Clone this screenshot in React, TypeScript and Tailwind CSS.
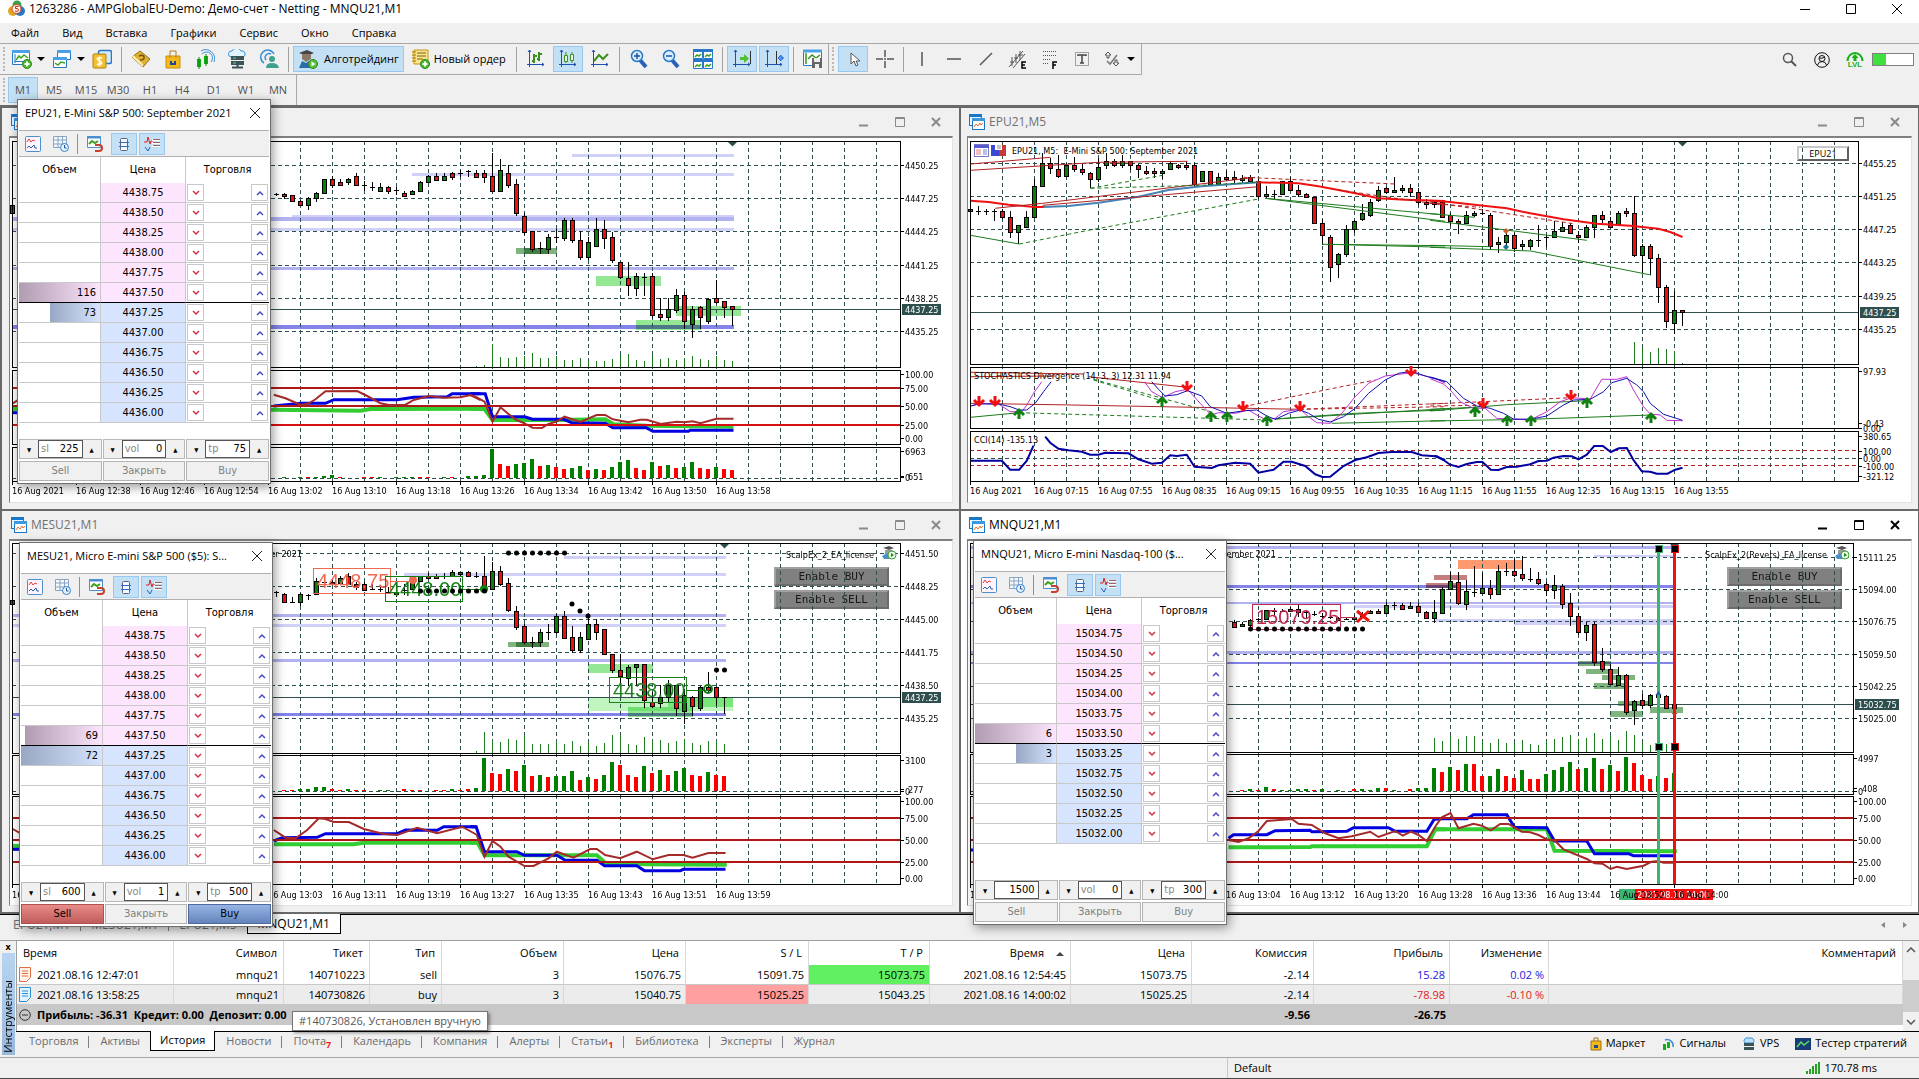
import { ReactNode } from 'react';

const ui = "font-['Open_Sans','Noto_Sans',sans-serif]";
const small = "font-['DejaVu_Sans_Condensed','DejaVu_Sans','Noto_Sans',sans-serif]";

// [bar, high, body top, body bottom, low, colour]  g = up, r = down, d = doji
type Candle = [number, number, number, number, number, 'g' | 'r' | 'd'];
// [first bar, top, last bar, bottom, colour]
type Zone = [number, number, number, number, string];

type Series = { color: string; width: number; a?: string; b?: string; dash?: boolean };

type ChartData = {
  col: 0 | 1;
  y0: number;
  right: number;
  panes: [number, number][];
  grid: number[];
  prices: string[];
  price: [number, string];
  subGrid?: number[];
  levels: [number, string, number?][];
  scale: [number, string, number?][];
  times: string[];
  timeY: number;
  bands: Zone[];
  zones: Zone[];
  candles: Candle[];
  ticks: [number, number[]];
  bars?: [number, number, string, number[]];
  under: Series[];
  series: Series[];
  marker: number;
};

const LIGHT = '#d0d0f8';
const MID = '#b2b2f0';
const STRONG = '#8484ea';
const LIME = '#94e894';
const MOSS = '#7fb47f';

function parse(s: string, col: 0 | 1, half: 'a' | 'b') {
  const start = half === 'a' ? [36, 46][col] : [67, 61][col];
  const base = half === 'a' ? 0 : 60;
  return s.split(' ').map((p) => {
    const [x, y] = p.split(',').map(Number);
    return [base + (x - start) / 24, y];
  });
}

function toX(i: number) {
  return 2.5 + i * 8;
}

function Trace({ s, c }: { s: Series; c: ChartData }) {
  const chunks = [
    ...(s.a ? s.a.split('|').map((p) => parse(p, c.col, 'a')) : []),
    ...(s.b ? s.b.split('|').map((p) => parse(p, c.col, 'b')) : []),
  ];
  return (
    <>
      {chunks.map((pts, k) => (
        <polyline
          key={k}
          points={pts.map(([i, y]) => `${toX(i).toFixed(1)},${(y / 3 - c.y0).toFixed(1)}`).join(' ')}
          fill="none"
          stroke={s.color}
          strokeWidth={s.width}
          strokeDasharray={s.dash ? '4 3' : undefined}
        />
      ))}
    </>
  );
}

function Chart({ c, children }: { c: ChartData; children?: ReactNode }) {
  const Y = (v: number) => Math.round(v / 3 - c.y0);
  const top = Y(c.panes[0][0]);
  const bottom = Y(c.panes[c.panes.length - 1][1]);
  const grid = Array.from({ length: 27 }, (_, k) => 34 + k * 32);
  return (
    <svg className={`relative block h-[364px] w-full text-[9px] ${small}`}>
      <g shapeRendering="crispEdges">
        {c.bands.map(([i, t, j, b, fill], k) => (
          <rect key={k} x={8 * i + 2} y={Y(t)} width={8 * (j - i) + 2} height={Y(b) - Y(t)} fill={fill} />
        ))}
        {c.zones.map(([i, t, j, b, fill], k) => (
          <rect
            key={k}
            x={8 * i + 2.5}
            y={Y(t) + 0.5}
            width={8 * (j - i)}
            height={Y(b) - Y(t) - 1}
            fill={fill}
            stroke={fill}
            className="mix-blend-multiply"
          />
        ))}
        {grid.map((x) => (
          <line key={x} x1={x + 0.5} x2={x + 0.5} y1={top} y2={bottom} stroke="#2f4f4f" strokeDasharray="4 3" />
        ))}
        {[...c.grid, ...(c.subGrid ?? [])].map((v) => (
          <line key={v} x1="2" x2={c.right} y1={Y(v) + 0.5} y2={Y(v) + 0.5} stroke="#2f4f4f" strokeDasharray="4 3" />
        ))}
        <line x1="2" x2={c.right} y1={Y(c.price[0]) + 0.5} y2={Y(c.price[0]) + 0.5} stroke="#2f4f4f" />
        {c.ticks[1].map((v, k) => (
          <rect key={k} x={8 * (c.ticks[0] + k) + 2} y={Y(v)} width="1" height={Y(c.panes[0][1]) - Y(v)} fill="#1c7c1c" />
        ))}
        {c.bars &&
          c.bars[3].map((v, k) => (
            <rect
              key={k}
              x={8 * (c.bars![0] + k)}
              y={Y(v)}
              width="4"
              height={Y(c.bars![1]) - Y(v)}
              fill={c.bars![2][k] === 'g' ? '#008000' : '#ff0000'}
            />
          ))}
      </g>
      {c.under.map((s, k) => (
        <Trace key={k} s={s} c={c} />
      ))}
      <g shapeRendering="crispEdges">
        {c.candles.map(([i, h, t, b, l, kind]) => {
          const x = i * 8;
          const bh = Math.max(Y(b) - Y(t) + 1, 3);
          return (
            <g key={i}>
              <rect x={x + 2} y={Y(h)} width="1" height={Math.max(Y(l) - Y(h), 1)} fill="#000" />
              {kind === 'd' ? (
                <rect x={x} y={Y(t)} width="5" height="1" fill="#000" />
              ) : (
                <>
                  <rect x={x} y={Y(t)} width="5" height={bh} fill="#000" />
                  <rect x={x + 1} y={Y(t) + 1} width="3" height={bh - 2} fill={kind === 'g' ? '#0a800a' : '#ee1010'} />
                </>
              )}
            </g>
          );
        })}
        {c.levels.map(([v, color, w], k) => (
          <line
            key={k}
            x1="2"
            x2={c.right}
            y1={w ? Y(v) : Y(v) + 0.5}
            y2={w ? Y(v) : Y(v) + 0.5}
            stroke={color}
            strokeWidth={w ?? 1}
            strokeDasharray={w ? undefined : '4 3'}
          />
        ))}
      </g>
      {c.series.map((s, k) => (
        <Trace key={k} s={s} c={c} />
      ))}
      <g shapeRendering="crispEdges">
        {c.panes.map(([a, b], k) => (
          <rect key={k} x="2.5" y={Y(a) + 0.5} width={c.right - 2} height={Y(b) - Y(a)} fill="none" stroke="#000" />
        ))}
        {[...c.grid, ...c.scale.map((s) => s[0])].map((v) => (
          <line key={v} x1={c.right} x2={c.right + 4} y1={Y(v) + 0.5} y2={Y(v) + 0.5} stroke="#000" />
        ))}
        {c.times.map((_, k) => (
          <line key={k} x1={2.5 + k * 64} x2={2.5 + k * 64} y1={bottom} y2={bottom + 4} stroke="#000" />
        ))}
      </g>
      <path d={`M${8 * c.marker - 2} ${top + 1}h9l-4.5 4.5z`} fill="#2f4f4f" />
      {c.grid.map((v, k) => (
        <text key={v} x={c.right + 5} y={Y(v) + 4}>
          {c.prices[k]}
        </text>
      ))}
      {c.scale.map(([v, t, dx], k) => (
        <text key={k} x={c.right + 5 + (dx ?? 0)} y={Y(v) + 4}>
          {t}
        </text>
      ))}
      <rect x={c.right + 2} y={Y(c.price[0]) - 5} width={c.price[1].length > 7 ? 44 : 39} height="11" fill="#2f4f4f" />
      <text x={c.right + 5} y={Y(c.price[0]) + 4} fill="#fff">
        {c.price[1]}
      </text>
      {children}
      {c.times.map((t, k) => (
        <text key={t} x={2 + k * 64} y={Y(c.timeY) + 4}>
          16 Aug {t}
        </text>
      ))}
    </svg>
  );
}

const volColors = 'grrgggrgrrggrgrgggrrgrgrggrrgrr';

const epuM1: ChartData = {
  col: 0,
  y0: 48,
  right: 890,
  panes: [[152, 832], [839, 1063], [1070, 1173]],
  grid: [226, 325, 424, 526, 625, 724],
  prices: ['4450.25', '4447.25', '4444.25', '4441.25', '4438.25', '4435.25'],
  price: [658, '4437.25'],
  subGrid: [1165],
  levels: [[894, '#b01818', 2], [948, '#b01818', 2], [1005, '#d81010', 2]],
  scale: [[853, '100.00'], [895, '75.00'], [949, '50.00'], [1006, '25.00'], [1045, '0.00'], [1084, '6963'], [1160, '0'], [1157, '651', 3]],
  times: ['2021', '12:38', '12:46', '12:54', '13:02', '13:10', '13:18', '13:26', '13:34', '13:42', '13:50', '13:58'],
  timeY: 1201,
  bands: [
    [70, 191, 90, 201, LIGHT],
    [50, 249, 90, 258, LIGHT],
    [35, 375, 90, 381, LIGHT],
    [0, 381, 90, 393, MID],
    [0, 414, 90, 423, LIGHT],
    [0, 530, 90, 540, MID],
    [0, 705, 90, 717, STRONG],
  ],
  zones: [
    [63, 475, 68, 491, MOSS],
    [64, 475, 67, 491, MOSS],
    [73, 559, 81, 587, LIME],
    [83, 649, 91, 677, LIME],
    [78, 691, 86, 719, LIME],
  ],
  candles: [
    [0, 343, 345, 368, 370, 'g'], [33, 310, 311, 311, 318, 'd'], [34, 308, 311, 318, 326, 'r'], [35, 314, 316, 334, 336, 'r'],
    [36, 330, 334, 344, 347, 'r'], [37, 320, 325, 344, 360, 'g'], [38, 306, 310, 325, 336, 'g'], [39, 266, 268, 310, 312, 'g'],
    [40, 258, 268, 284, 293, 'r'], [41, 268, 277, 284, 286, 'r'], [42, 264, 268, 277, 284, 'g'], [43, 249, 259, 284, 287, 'r'],
    [44, 274, 284, 284, 302, 'd'], [45, 276, 292, 292, 302, 'd'], [46, 280, 292, 302, 303, 'g'], [47, 289, 292, 302, 312, 'r'],
    [48, 292, 301, 301, 314, 'd'], [49, 302, 310, 317, 320, 'r'], [50, 300, 302, 311, 312, 'g'], [51, 274, 277, 302, 304, 'g'],
    [52, 256, 259, 277, 280, 'g'], [53, 250, 259, 269, 271, 'r'], [54, 250, 259, 269, 271, 'g'], [55, 247, 250, 260, 270, 'r'],
    [56, 240, 250, 250, 262, 'd'], [57, 240, 242, 242, 262, 'd'], [58, 240, 250, 260, 262, 'r'], [59, 240, 250, 260, 278, 'r'],
    [60, 190, 259, 302, 303, 'r'], [61, 207, 241, 302, 303, 'g'], [62, 226, 250, 284, 293, 'r'], [63, 267, 283, 368, 377, 'r'],
    [64, 370, 377, 425, 434, 'r'], [65, 424, 424, 476, 486, 'r'], [66, 457, 475, 475, 492, 'd'], [67, 432, 442, 476, 491, 'g'],
    [68, 418, 442, 442, 459, 'd'], [69, 384, 391, 443, 453, 'g'], [70, 384, 391, 451, 459, 'r'], [71, 424, 451, 500, 510, 'r'],
    [72, 441, 457, 500, 511, 'g'], [73, 384, 418, 467, 468, 'g'], [74, 390, 418, 443, 477, 'r'], [75, 425, 442, 510, 518, 'r'],
    [76, 516, 516, 560, 567, 'r'], [77, 516, 565, 584, 618, 'r'], [78, 550, 559, 593, 618, 'g'], [79, 549, 560, 560, 618, 'd'],
    [80, 548, 559, 674, 684, 'r'], [81, 625, 672, 682, 692, 'r'], [82, 625, 658, 682, 693, 'g'], [83, 597, 616, 659, 669, 'g'],
    [84, 607, 616, 692, 716, 'r'], [85, 647, 658, 702, 744, 'g'], [86, 649, 650, 682, 716, 'r'], [87, 625, 626, 692, 702, 'g'],
    [88, 571, 625, 636, 641, 'r'], [89, 634, 634, 650, 684, 'r'], [90, 648, 649, 658, 708, 'r'],
  ],
  ticks: [58, [828, 825, 763, 800, 803, 801, 797, 789, 804, 804, 797, 809, 810, 803, 812, 812, 812, 806, 796, 792, 809, 812, 796, 808, 803, 810, 803, 797, 808, 810, 797, 809, 812]],
  bars: [34, 1165, 'grgrgggrrgrrgrgggrrrgrgggg' + volColors,
    [1162, 1163, 1162, 1162, 1162, 1158, 1155, 1162, 1163, 1163, 1162, 1162, 1160, 1163, 1162, 1162, 1160, 1161, 1162, 1163, 1160, 1161, 1163, 1158, 1158, 1155,
      1077, 1122, 1129, 1122, 1119, 1107, 1129, 1126, 1131, 1137, 1134, 1129, 1140, 1137, 1140, 1131, 1116, 1110, 1134, 1140, 1116, 1129, 1126, 1134, 1131, 1116, 1134, 1137, 1131, 1137, 1140]],
  under: [
    { color: '#32cd32', width: 4, a: '37,957 820,959 1080,962 1110,957 1440,956', b: '0,956 43,957 67,990 259,990 405,988 430,1003 530,1007 790,1010' },
    { color: '#0000e0', width: 3, a: '37,968 60,968|820,948 901,940 975,940 1000,929 1190,929 1220,925 1240,922 1340,920 1355,911 1440,911', b: '0,911 45,911 67,980 163,980 187,988 280,988 305,998 405,1000 428,1013 528,1013 548,1024 655,1024 660,1021 790,1021' },
  ],
  series: [
    { color: '#a52a2a', width: 2, a: '37,940 60,925|820,914 855,925 901,945 925,940 945,928 975,904 1070,903 1100,918 1140,940 1165,945 1215,944 1240,930 1285,918 1330,923 1380,922 1410,915 1440,930', b: '0,915 20,922 43,935 67,995 91,952 115,972 139,990 163,1000 187,1013 215,1014 235,1002 259,995 283,980 331,996 379,975 405,975 428,988 475,997 510,989 530,989 572,1002 619,995 643,997 667,994 691,1000 739,986 790,986' },
  ],
  marker: 90,
};

const epuM5: ChartData = {
  col: 1,
  y0: 38,
  right: 890,
  panes: [[122, 793], [800, 985], [992, 1143]],
  grid: [190, 289, 388, 487, 589, 688],
  prices: ['4455.25', '4451.25', '4447.25', '4443.25', '4439.25', '4435.25'],
  price: [637, '4437.25'],
  subGrid: [1075],
  levels: [[1051, '#b02020'], [1096, '#b02020']],
  scale: [[814, '97.93'], [969, '-0.43'], [983, '0.00'], [1007, '380.65'], [1052, '100.00'], [1073, '0.00'], [1097, '-100.00'], [1128, '-321.12']],
  times: ['2021', '07:15', '07:55', '08:35', '09:15', '09:55', '10:35', '11:15', '11:55', '12:35', '13:15', '13:55'],
  timeY: 1171,
  bands: [],
  zones: [],
  candles: [
    [0, 318, 326, 334, 344, 'r'], [1, 318, 334, 334, 346, 'd'], [2, 326, 334, 334, 344, 'd'], [3, 328, 334, 334, 364, 'd'],
    [4, 328, 334, 352, 356, 'r'], [5, 334, 352, 395, 413, 'r'], [6, 376, 376, 395, 432, 'g'], [7, 334, 352, 382, 384, 'g'],
    [8, 236, 259, 352, 355, 'g'], [9, 160, 190, 259, 260, 'g'], [10, 173, 190, 203, 221, 'r'], [11, 165, 208, 227, 233, 'r'],
    [12, 190, 196, 227, 228, 'g'], [13, 172, 196, 208, 215, 'r'], [14, 191, 208, 215, 226, 'r'], [15, 215, 220, 238, 265, 'r'],
    [16, 175, 202, 238, 246, 'g'], [17, 158, 184, 196, 208, 'g'], [18, 178, 184, 196, 202, 'r'], [19, 165, 184, 196, 203, 'g'],
    [20, 184, 184, 196, 210, 'r'], [21, 192, 196, 208, 234, 'r'], [22, 197, 213, 220, 226, 'r'], [23, 203, 213, 220, 233, 'r'],
    [24, 208, 214, 220, 238, 'g'], [25, 186, 190, 208, 210, 'g'], [26, 192, 196, 202, 208, 'r'], [27, 184, 196, 202, 210, 'r'],
    [28, 190, 196, 252, 262, 'r'], [29, 214, 214, 244, 247, 'g'], [30, 214, 214, 252, 258, 'r'], [31, 220, 232, 252, 254, 'g'],
    [32, 214, 232, 238, 244, 'r'], [33, 214, 232, 238, 252, 'r'], [34, 226, 233, 238, 248, 'g'], [35, 226, 232, 244, 250, 'r'],
    [36, 238, 244, 289, 298, 'r'], [37, 257, 283, 289, 295, 'g'], [38, 270, 283, 283, 300, 'd'], [39, 244, 244, 283, 284, 'g'],
    [40, 232, 244, 270, 272, 'r'], [41, 256, 270, 283, 290, 'r'], [42, 278, 283, 290, 295, 'r'], [43, 290, 290, 370, 371, 'r'],
    [44, 356, 370, 406, 434, 'r'], [45, 406, 412, 502, 546, 'r'], [46, 458, 463, 493, 534, 'g'], [47, 376, 388, 463, 472, 'g'],
    [48, 360, 364, 388, 398, 'g'], [49, 312, 340, 358, 364, 'g'], [50, 296, 307, 346, 350, 'g'], [51, 258, 270, 301, 306, 'g'],
    [52, 262, 265, 277, 282, 'r'], [53, 232, 270, 277, 280, 'g'], [54, 256, 265, 271, 278, 'g'], [55, 253, 265, 277, 290, 'r'],
    [56, 264, 277, 307, 314, 'r'], [57, 298, 307, 313, 326, 'r'], [58, 302, 307, 313, 325, 'r'], [59, 301, 306, 352, 354, 'r'],
    [60, 340, 346, 364, 377, 'r'], [61, 358, 364, 370, 402, 'r'], [62, 334, 346, 370, 373, 'g'], [63, 334, 340, 346, 352, 'g'],
    [64, 328, 340, 340, 346, 'd'], [65, 340, 346, 439, 451, 'r'], [66, 412, 427, 433, 458, 'g'], [67, 400, 406, 427, 440, 'g'],
    [68, 400, 406, 445, 456, 'r'], [69, 420, 433, 439, 450, 'g'], [70, 418, 421, 439, 450, 'g'], [71, 376, 420, 420, 440, 'd'],
    [72, 406, 412, 412, 440, 'd'], [73, 364, 394, 412, 414, 'g'], [74, 366, 382, 394, 395, 'g'], [75, 370, 376, 400, 402, 'r'],
    [76, 392, 406, 412, 428, 'r'], [77, 376, 382, 412, 415, 'g'], [78, 346, 346, 382, 414, 'g'], [79, 333, 346, 358, 369, 'r'],
    [80, 350, 364, 382, 384, 'r'], [81, 333, 340, 373, 376, 'g'], [82, 324, 334, 340, 352, 'r'], [83, 289, 340, 464, 470, 'r'],
    [84, 432, 439, 464, 518, 'g'], [85, 433, 439, 475, 524, 'r'], [86, 462, 475, 562, 608, 'r'], [87, 556, 562, 662, 684, 'r'],
    [88, 573, 631, 670, 702, 'g'], [89, 630, 631, 637, 678, 'r'],
  ],
  ticks: [83, [727, 744, 756, 744, 748, 753, 788]],
  under: [],
  series: [
    { color: '#4682b4', width: 2, a: '262,321 340,318 430,308 550,290 640,270 740,259 910,247' },
    { color: '#f01010', width: 2, a: '46,302 100,306 160,314 238,321 265,321|905,247 1030,250 1090,259 1150,270 1200,280 1270,295 1350,299 1400,301 1470,303', b: '0,302 60,306 140,315 230,325 300,340 400,358 500,371 600,377 685,386 720,396 757,411' },
    { color: '#b02020', width: 1, a: '46,192 286,172|46,211 286,196 430,187 697,184|120,325 262,310 900,232|262,316 910,260' },
    { color: '#b02020', width: 1, dash: true, a: '865,232 1000,238 1320,252|1150,270 1470,316', b: '0,306 430,371|0,310 150,322' },
    { color: '#1c7c1c', width: 1, a: '46,406 192,432|930,295 1470,345|930,295 1470,364|1102,433 1470,437|1120,433 1470,442', b: '0,341 133,352|0,361 470,421|0,436 180,440|0,442 302,453 662,525' },
    { color: '#1c7c1c', width: 1, dash: true, a: '192,432 400,391 910,297|406,265 622,226|406,265 740,256 910,247' },
    { color: '#b02020', width: 1, a: '46,817 385,822|46,830 300,828|400,830 697,862|46,910 350,915 1034,928' },
    { color: '#b02020', width: 1, dash: true, a: '865,920 1120,868 1260,840|1034,928 1470,910|1034,928 1470,920', b: '0,912 424,893|0,918 160,916' },
    { color: '#1c7c1c', width: 1, a: '46,952 192,938|960,957 1200,940 1470,930|960,957 1470,926|1130,970 1470,962', b: '0,928 134,922|0,933 230,914 470,902|0,963 302,958 662,945' },
    { color: '#1c7c1c', width: 1, dash: true, a: '192,938 936,960|415,840 622,903|415,838 767,935' },
    { color: '#c030d0', width: 1, a: '46,918 80,910 130,912 165,935 200,935 215,915 235,880 260,845|568,845 590,875 622,893 660,875 697,868 735,910 768,945 790,938 840,940 880,930 910,948 935,960 960,955 985,935 1035,928 1060,950 1085,968 1125,970 1160,940 1200,890 1240,850 1290,828 1370,818 1440,835 1470,850', b: '0,836 40,852 60,870 90,905 130,925 165,925 200,955 300,960 350,935 390,905 425,893 480,897 515,838 560,838 590,830 610,870 640,920 660,942 690,945 710,961 757,962' },
    { color: '#1010b0', width: 1, a: '46,918 70,912 130,912 165,920 192,930 215,930 240,910 265,875 288,845|590,845 610,868 630,888 665,884 697,872 740,888 765,920 815,940 870,932 905,930 935,948 960,958 1000,940 1035,930 1060,940 1090,958 1125,966 1165,950 1200,925 1240,880 1290,840 1330,820 1370,814 1410,828 1470,845', b: '0,831 50,845 100,895 140,918 180,925 220,940 250,957 300,958 350,948 400,915 430,900 480,898 520,875 545,848 590,835 620,855 640,875 660,910 700,943 757,961' },
    { color: '#0000a0', width: 2, a: '46,1082 140,1082 165,1109 192,1109 215,1082 235,1037|270,1010 285,1028 310,1046 340,1051 380,1055 405,1064 430,1064 450,1058 520,1060 550,1078 590,1091 620,1088 645,1066 665,1068 695,1064 718,1100 770,1104 790,1096 840,1088 885,1091 910,1118 955,1109 985,1085 1010,1085 1050,1098 1080,1123 1102,1131 1125,1130 1165,1098 1200,1080 1235,1072 1270,1059 1310,1056 1370,1056 1400,1066 1440,1069 1470,1080', b: '12,1068 20,1069 40,1080 60,1094 85,1101 110,1092 140,1086 157,1086 182,1109 205,1110 230,1101 260,1100 300,1093 325,1083 350,1082 370,1073 400,1068 425,1069 445,1078 470,1064 492,1038 518,1038 542,1056 566,1045 590,1044 610,1080 635,1114 660,1115 680,1121 712,1121 735,1109 757,1103' },
  ],
  marker: 89,
};

const mesM1: ChartData = {
  col: 0,
  y0: 36,
  right: 890,
  panes: [[115, 745], [751, 867], [874, 1138]],
  grid: [145, 244, 343, 442, 541, 640],
  prices: ['4451.50', '4448.25', '4445.00', '4441.75', '4438.50', '4435.25'],
  price: [577, '4437.25'],
  subGrid: [859],
  levels: [[940, '#b01818', 2], [1006, '#b01818', 2], [1072, '#b01818', 2]],
  scale: [[766, '3100'], [857, '0'], [852, '277', 3], [889, '100.00'], [940, '75.00'], [1006, '50.00'], [1072, '25.00'], [1120, '0.00']],
  times: ['2021', '12:39', '12:47', '12:55', '13:03', '13:11', '13:19', '13:27', '13:35', '13:43', '13:51', '13:59'],
  timeY: 1166,
  bands: [
    [69, 152, 89, 162, LIGHT],
    [49, 204, 89, 213, LIGHT],
    [0, 327, 89, 336, MID],
    [0, 357, 89, 366, LIGHT],
    [0, 462, 89, 471, MID],
    [0, 624, 89, 634, STRONG],
  ],
  zones: [
    [62, 412, 67, 427, MOSS],
    [63, 412, 66, 427, MOSS],
    [72, 478, 80, 505, LIME],
    [72, 577, 90, 617, '#c0f5c0'],
    [77, 607, 85, 635, LIME],
    [82, 577, 90, 605, '#a0f0a0'],
  ],
  candles: [
    [0, 280, 285, 298, 300, 'g'], [33, 258, 261, 261, 276, 'd'], [34, 265, 268, 290, 292, 'r'], [35, 276, 290, 290, 292, 'd'],
    [36, 265, 268, 290, 302, 'g'], [37, 268, 270, 270, 284, 'd'], [38, 218, 229, 268, 270, 'g'], [39, 216, 230, 230, 245, 'd'],
    [40, 222, 230, 236, 238, 'r'], [41, 212, 220, 235, 238, 'g'], [42, 205, 214, 236, 238, 'r'], [43, 230, 236, 246, 255, 'r'],
    [44, 232, 236, 254, 256, 'r'], [45, 236, 252, 252, 256, 'd'], [46, 246, 252, 252, 260, 'd'], [47, 246, 260, 260, 262, 'd'],
    [48, 245, 260, 268, 276, 'g'], [49, 236, 256, 256, 270, 'd'], [50, 222, 229, 252, 256, 'g'], [51, 212, 214, 229, 230, 'g'],
    [52, 205, 214, 220, 222, 'r'], [53, 206, 214, 220, 222, 'r'], [54, 204, 213, 213, 222, 'd'], [55, 196, 200, 214, 216, 'g'],
    [56, 200, 200, 206, 214, 'g'], [57, 198, 200, 214, 216, 'r'], [58, 200, 214, 214, 220, 'd'], [59, 152, 214, 253, 262, 'r'],
    [60, 172, 199, 253, 254, 'g'], [61, 184, 199, 236, 244, 'r'], [62, 220, 235, 314, 320, 'r'], [63, 304, 319, 365, 374, 'r'],
    [64, 358, 364, 412, 418, 'r'], [65, 395, 412, 412, 430, 'd'], [66, 372, 381, 412, 425, 'g'], [67, 356, 382, 382, 404, 'd'],
    [68, 328, 334, 382, 388, 'g'], [69, 318, 334, 398, 400, 'r'], [70, 364, 397, 434, 443, 'r'], [71, 382, 397, 434, 444, 'g'],
    [72, 330, 358, 403, 406, 'g'], [73, 342, 358, 382, 405, 'r'], [74, 372, 373, 448, 450, 'r'], [75, 448, 448, 496, 503, 'r'],
    [76, 448, 496, 512, 542, 'r'], [77, 480, 487, 518, 542, 'g'], [78, 478, 478, 487, 542, 'g'], [79, 478, 478, 586, 608, 'r'],
    [80, 560, 592, 602, 608, 'r'], [81, 540, 577, 593, 608, 'g'], [82, 525, 541, 577, 590, 'g'], [83, 541, 541, 608, 632, 'r'],
    [84, 552, 571, 617, 656, 'g'], [85, 572, 577, 602, 633, 'r'], [86, 544, 547, 608, 618, 'g'], [87, 502, 547, 556, 562, 'r'],
    [88, 546, 547, 577, 602, 'r'], [89, 577, 577, 577, 628, 'd'],
  ],
  ticks: [58, [738, 682, 708, 711, 702, 705, 690, 717, 717, 717, 708, 717, 708, 723, 711, 723, 714, 690, 690, 717, 720, 696, 708, 705, 714, 708, 702, 714, 720, 708, 708, 717]],
  bars: [34, 859, 'rrggggrrgrrrgggrrrrrrgrrg' + 'grrgrgrgrgggrgrggrrrgrgrggrrgrr',
    [856, 856, 853, 853, 847, 847, 853, 856, 853, 856, 856, 857, 856, 856, 857, 853, 856, 856, 857, 856, 856, 853, 856, 853, 850,
      759, 805, 808, 793, 799, 781, 814, 811, 817, 814, 814, 799, 826, 817, 823, 811, 771, 781, 811, 817, 784, 805, 796, 811, 799, 790, 811, 814, 802, 811, 814]],
  under: [
    { color: '#32cd32', width: 4, a: '37,1022 60,1024|820,1018 1060,1018 1090,1013 1425,1013', b: '0,1013 22,1013 43,1051 380,1051 405,1073 530,1078 770,1079' },
    { color: '#0000e0', width: 3, a: '37,1033 60,1033|820,1008 845,998 950,997 975,986 1190,986 1215,975 1310,976 1330,965 1430,965', b: '0,965 18,966 43,1040 140,1040 163,1051 260,1051 285,1066 380,1066 403,1082 500,1082 523,1097 630,1097 640,1093 766,1093' },
  ],
  series: [
    { color: '#a52a2a', width: 2, a: '37,972 60,985|820,975 855,998 885,1000 920,975 955,940 975,942 1000,951 1045,951 1090,972 1150,987 1190,990 1250,968 1310,985 1385,965 1430,990', b: '20,990 43,1055 67,1008 91,1025 115,1055 163,1083 190,1083 235,1060 260,1040 310,1058 360,1032 380,1032 405,1050 450,1060 500,1040 548,1063 595,1050 640,1050 667,1058 715,1044 766,1044' },
  ],
  marker: 89,
};

const mnqM1: ChartData = {
  col: 1,
  y0: 36,
  right: 885,
  panes: [[115, 740], [746, 867], [874, 1138]],
  grid: [157, 253, 349, 448, 544, 640],
  prices: ['15111.25', '15094.00', '15076.75', '15059.50', '15042.25', '15025.00'],
  price: [598, '15032.75'],
  subGrid: [859],
  levels: [[940, '#b01818', 2], [1006, '#b01818', 2], [1072, '#b01818', 2]],
  scale: [[759, '4997'], [857, '0'], [850, '408', 4], [889, '100.00'], [940, '75.00'], [1006, '50.00'], [1072, '25.00'], [1120, '0.00']],
  times: ['2021', '12:40', '12:48', '12:56', '13:04', '13:12', '13:20', '13:28', '13:36', '13:44', '13:52', '14:00'],
  timeY: 1166,
  bands: [
    [0, 123, 88, 132, MID],
    [78, 150, 88, 157, LIGHT],
    [0, 240, 88, 249, STRONG],
    [0, 291, 88, 298, MID],
    [48, 299, 88, 308, LIGHT],
    [58, 343, 88, 350, LIGHT],
    [68, 350, 88, 359, LIGHT],
    [0, 438, 88, 447, MID],
    [0, 471, 88, 478, STRONG],
  ],
  zones: [
    [57, 235, 61, 250, '#c47e7e'],
    [58, 211, 62, 226, '#c47e7e'],
    [61, 166, 69, 193, '#ff9a70'],
    [76, 469, 80, 484, MOSS],
    [77, 493, 81, 508, MOSS],
    [79, 511, 83, 526, MOSS],
    [78, 535, 82, 551, MOSS],
    [81, 589, 85, 604, MOSS],
    [80, 619, 84, 635, MOSS],
    [85, 607, 89, 623, MOSS],
  ],
  candles: [
    [33, 346, 352, 365, 370, 'r'], [34, 352, 358, 364, 366, 'g'], [35, 342, 346, 359, 374, 'g'], [36, 338, 343, 343, 348, 'd'],
    [37, 314, 316, 341, 343, 'g'], [38, 308, 318, 318, 330, 'd'], [39, 312, 318, 318, 320, 'd'], [40, 306, 311, 317, 318, 'g'],
    [41, 298, 311, 322, 335, 'r'], [42, 318, 322, 322, 340, 'd'], [43, 318, 327, 327, 334, 'd'], [44, 324, 333, 333, 342, 'd'],
    [45, 334, 335, 335, 343, 'd'], [46, 336, 340, 342, 348, 'g'], [47, 338, 343, 343, 346, 'd'], [48, 331, 335, 341, 345, 'g'],
    [49, 320, 328, 334, 338, 'g'], [50, 314, 317, 325, 328, 'g'], [51, 312, 317, 324, 326, 'r'], [52, 291, 301, 323, 325, 'g'],
    [53, 292, 299, 299, 314, 'd'], [54, 295, 301, 311, 314, 'r'], [55, 292, 302, 308, 311, 'g'], [56, 295, 304, 320, 322, 'r'],
    [57, 317, 320, 338, 340, 'r'], [58, 285, 322, 338, 353, 'g'], [59, 245, 253, 323, 325, 'g'], [60, 202, 229, 253, 255, 'g'],
    [61, 202, 232, 293, 301, 'r'], [62, 224, 259, 296, 315, 'g'], [63, 182, 260, 260, 275, 'd'], [64, 205, 250, 263, 266, 'g'],
    [65, 226, 250, 266, 281, 'r'], [66, 180, 199, 266, 267, 'g'], [67, 175, 198, 198, 212, 'd'], [68, 162, 199, 209, 215, 'r'],
    [69, 152, 208, 220, 227, 'r'], [70, 190, 223, 223, 232, 'd'], [71, 200, 223, 235, 240, 'r'], [72, 232, 238, 254, 274, 'r'],
    [73, 209, 241, 254, 281, 'g'], [74, 238, 244, 296, 311, 'r'], [75, 265, 295, 332, 362, 'r'], [76, 324, 334, 380, 389, 'r'],
    [77, 350, 361, 380, 407, 'g'], [78, 350, 358, 470, 484, 'r'], [79, 430, 469, 493, 502, 'r'], [80, 478, 493, 536, 541, 'r'],
    [81, 486, 511, 539, 543, 'g'], [82, 508, 511, 620, 629, 'r'], [83, 585, 589, 616, 659, 'g'], [84, 568, 586, 599, 612, 'r'],
    [85, 568, 571, 599, 610, 'g'], [86, 545, 571, 577, 582, 'r'], [87, 570, 574, 608, 612, 'r'], [88, 598, 598, 608, 655, 'g'],
  ],
  ticks: [58, [699, 708, 692, 702, 694, 692, 708, 714, 702, 714, 710, 705, 717, 720, 708, 702, 696, 690, 702, 699, 684, 702, 690, 705, 678, 690, 711, 720, 714, 717, 714]],
  bars: [34, 859, 'rgrgrggggrgrggrgggrgrrgg' + 'grgrgrrggrrgrrggggrggrgrgrrrgrg',
    [856, 853, 856, 847, 853, 856, 856, 853, 853, 856, 853, 857, 856, 857, 853, 853, 856, 850, 850, 856, 857, 853, 850, 850,
      790, 802, 787, 796, 778, 778, 814, 814, 793, 814, 820, 796, 823, 823, 808, 796, 787, 771, 793, 790, 759, 793, 781, 799, 756, 775, 811, 823, 814, 820, 805]],
  under: [
    { color: '#32cd32', width: 4, a: '820,1027 1065,1026 1070,1024 1415,1024 1440,973 1470,973', b: '12,973 350,973 373,1037 740,1039' },
    { color: '#0000e0', width: 3, a: '46,1035 60,1035|820,1000 835,989 935,989 960,977 1065,976 1070,980 1175,979 1195,968 1300,968 1320,979 1415,979 1437,943 1470,940', b: '12,941 110,941 130,929 230,929 253,967 350,968 373,1008 470,1008 493,1046 595,1046 610,1052 736,1052' },
  ],
  series: [
    { color: '#a52a2a', width: 2, a: '820,1005 850,1011 880,1000 910,978 935,948 1010,942 1030,956 1070,960 1110,985 1150,1000 1190,994 1245,980 1270,996 1320,978 1343,992 1367,980 1390,990 1415,1008 1440,965 1460,937', b: '34,937 61,924 85,970 130,956 155,962 182,976 210,957 235,957 275,980 300,982 325,990 350,1003 375,1008 400,1033 470,1062 493,1075 517,1076 541,1092 560,1085 590,1092 640,1082 665,1070 685,1068 700,1073 736,1073' },
  ],
  marker: 88,
};

const sellArrows = [[11, 907], [27, 907], [219, 860], [275, 920], [332, 922], [443, 817], [515, 912], [603, 887]];
const buyArrows = [[51, 940], [194, 903], [243, 947], [259, 948], [299, 960], [507, 932], [539, 960], [563, 960], [619, 905], [683, 950]];

function M5Marks() {
  return (
    <g>
      {sellArrows.map(([x, y]) => (
        <path key={x} d={`M${x} ${Math.round(y / 3) - 44}v9m-5 -5l5 5l5 -5`} fill="none" stroke="#f01010" strokeWidth="3" />
      ))}
      {buyArrows.map(([x, y]) => (
        <path key={x} d={`M${x} ${Math.round(y / 3) - 32}v-9m-5 5l5 -5l5 5`} fill="none" stroke="#108010" strokeWidth="3" />
      ))}
      <path d="M538 90l3 3l-3 3l-3-3z" fill="#d06030" />
      <path d="M538 106l3 3l-3 3l-3-3z" fill="#1a7090" />
      <g>
        <rect x="6.5" y="6.5" width="14" height="12" fill="#fff" stroke="#7878c0" />
        <path d="M6 8.500h15" stroke="#5a5ad0" strokeWidth="3" />
        <path d="M8 12h5M8 14h5M8 16h5" stroke="#e08080" />
        <path d="M15 12h4M15 14h4M15 16h4" stroke="#7080e0" />
        <path d="M23 7h4v5h4v6h-8z" fill="#3a48d8" />
        <path d="M38 7h-4v5h-3v6h7z" fill="#c83838" />
        <path d="M29 8h4M29 10h4" stroke="#888" />
      </g>
      <text x="44" y="16">EPU21, M5:&nbsp; E-Mini S&amp;P 500: September 2021</text>
      <text x="6" y="241">STOCHASTICS Divergence (14, 3, 3) 12.31 11.94</text>
      <text x="6" y="305">CCI(14) -135.13</text>
    </g>
  );
}

function PriceTag({ x, y, w, color, children }: { x: number; y: number; w: number; color: string; children: string }) {
  return (
    <>
      <rect x={x + 0.5} y={y + 0.5} width={w} height="25" fill="none" stroke={color} />
      <text x={x + 4} y={y + 20} fill={color} className="font-['Liberation_Sans',sans-serif] text-[20px]">
        {children}
      </text>
    </>
  );
}

function Dots({ y, from, to }: { y: number; from: number; to: number }) {
  return (
    <>
      {Array.from({ length: to - from + 1 }, (_, k) => (
        <circle key={k} cx={2.5 + 8 * (from + k)} cy={y} r="2.500" />
      ))}
    </>
  );
}

function ExpertIcon({ x }: { x: number }) {
  return (
    <g transform={`translate(${x} 4)`}>
      <path d="M1 3l6-2l5 2l-5 2z" fill="#555" />
      <path d="M3 5h8v4l-4 2l-4-2z" fill="#9a9a9a" />
      <path d="M0 11l5-3l4 6h-7z" fill="#4a90c8" />
      <circle cx="10" cy="10" r="4" fill="#e8ffe0" stroke="#3aa03a" />
      <path d="M9 8l3 2l-3 2z" fill="#208020" />
    </g>
  );
}

function MesMarks() {
  return (
    <g>
      <text x="292" y="16" textAnchor="end">MESU21, M1:&nbsp; Micro E-mini S&amp;P 500 ($5): September 2021</text>
      <PriceTag x={303} y={27} w={77} color="#ee6a50">4448.75</PriceTag>
      <path d="M381 40.500h22" stroke="#ee6a50" />
      <circle cx="403" cy="39" r="4" fill="#ee6a50" />
      <PriceTag x={375} y={35} w={77} color="#108010">4448.00</PriceTag>
      <path d="M452 48.500h22" stroke="#108010" />
      <circle cx="474" cy="48" r="4" fill="#108010" />
      <PriceTag x={599} y={136} w={77} color="#208020">4438.00</PriceTag>
      <path d="M677 149.500h22" stroke="#108010" />
      <circle cx="698" cy="148" r="4" fill="none" stroke="#108010" strokeWidth="2" />
      <Dots y={12} from={62} to={69} />
      <Dots y={50} from={51} to={59} />
      <circle cx="562" cy="63" r="2.500" />
      <circle cx="570" cy="70" r="2.500" />
      <circle cx="578" cy="75" r="2.500" />
      <Dots y={129} from={88} to={89} />
      <text x="776" y="17">ScalpEx_2_EA_license</text>
      <ExpertIcon x={872} />
    </g>
  );
}

function MnqMarks() {
  return (
    <g>
      <text x="308" y="16" textAnchor="end">MNQU21, M1:&nbsp; Micro E-mini Nasdaq-100 ($2): September 2021</text>
      <PriceTag x={284} y={63} w={88} color="#c02850">15079.25</PriceTag>
      <path d="M373 76.500h16" stroke="#c02850" />
      <path d="M389 70l12 10m0-10l-12 11" stroke="#f01010" strokeWidth="3" />
      <Dots y={88} from={35} to={49} />
      <g shapeRendering="crispEdges">
        <rect x="689" y="4" width="3" height="339" fill="#3cb371" />
        <rect x="705" y="4" width="3" height="339" fill="#f01010" />
        {[4, 202].map((y) => (
          <g key={y}>
            <rect x="687" y={y} width="7" height="7" fill="#000" stroke="#3cb371" />
            <rect x="703" y={y} width="7" height="7" fill="#000" stroke="#e01010" />
          </g>
        ))}
      </g>
      <path d="M690.500 150l3 4h-6z" fill="#2060b0" />
      <path d="M706.500 175l-3-3h6z" fill="#c03030" />
      <rect x="651" y="348" width="16" height="11" fill="#3cb371" />
      <rect x="667" y="348" width="78" height="11" fill="#f01010" />
      <text x="669" y="357" fill="#fff">2021.08.16 14:00</text>
      <text x="737" y="17">ScalpEx_2(Revers)_EA_license</text>
      <ExpertIcon x={867} />
    </g>
  );
}

function ExpertButtons({ shift }: { shift: string }) {
  return (
    <div className={`absolute top-[26px] flex flex-col gap-1 ${shift}`}>
      {['Enable BUY', 'Enable SELL'].map((t) => (
        <button
          key={t}
          className="h-[19px] w-[115px] border-2 border-t-[#a0a0a0] border-r-[#6c6c6c] border-b-[#6c6c6c] border-l-[#a0a0a0] bg-[#808080] font-['DejaVu_Sans_Mono',monospace] text-[11px] leading-[14px] text-[#181818]"
        >
          {t}
        </button>
      ))}
    </div>
  );
}

function ChartIcon() {
  return (
    <svg className="h-4 w-4" viewBox="0 0 16 16">
      <rect x="0.5" y="0.5" width="12" height="11" fill="#e8f4ff" stroke="#1878c8" />
      <rect x="0" y="0" width="13" height="3" fill="#1878c8" />
      <rect x="3.500" y="4.500" width="12" height="11" fill="#fff" stroke="#1878c8" />
      <rect x="3" y="4" width="13" height="3" fill="#3a98e0" />
      <path d="M5 13l2-3l2 2l2-3l1 2l2-2" fill="none" stroke="#e07030" />
    </svg>
  );
}

function ChartWindow({ title, active, pad, children }: { title: string; active?: boolean; pad: string; children: ReactNode }) {
  const tone = active ? 'text-black' : 'text-[#8a8a8a]';
  return (
    <section className={`border-t-2 border-l-2 border-[#696969] pr-1.5 pb-1.5 ${pad} ${active ? 'bg-white' : 'bg-[#f0f0f0]'}`}>
      <header className="flex h-[28px] items-center justify-between">
        <h2 className={`flex items-center gap-1 pl-0.5 text-xs ${active ? 'text-black' : 'text-[#707070]'}`}>
          <ChartIcon />
          {title}
        </h2>
        <div className={`flex gap-[26px] pr-3 ${tone}`}>
          <button aria-label="Свернуть">
            <svg className="h-2.5 w-2.5" viewBox="0 0 10 10"><path d="M0 8.500h9" stroke="currentColor" strokeWidth="2" /></svg>
          </button>
          <button aria-label="Развернуть">
            <svg className="h-2.5 w-2.5" viewBox="0 0 10 10"><path d="M.5.5h9v9h-9zM0 1.500h10" fill="none" stroke="currentColor" /></svg>
          </button>
          <button aria-label="Закрыть">
            <svg className="h-2.5 w-2.5" viewBox="0 0 10 10"><path d="M1 1l8 8m0-8l-8 8" stroke="currentColor" strokeWidth="2" /></svg>
          </button>
        </div>
      </header>
      <div className="relative isolate border-t-2 border-r border-b border-l border-t-[#808080] border-r-[#e3e3e3] border-b-[#e3e3e3] border-l-[#808080] bg-white">
        {children}
      </div>
    </section>
  );
}

type Book = {
  title: string;
  asks: string[];
  bids: string[];
  ask: [number, number];
  bid: [number, number];
  sl: [string, number];
  vol: number;
  tp: number;
  live?: boolean;
};

function Spinner({ name, label, value }: { name: string; label: string; value: number }) {
  return (
    <div className="flex h-5 border border-[#b8b8b8] bg-[#f0f0f0]">
      <button className="w-[18px] text-[6px]" aria-label="Меньше">▼</button>
      <div className="flex flex-1 items-center border border-[#555] bg-white px-0.5">
        {label && <label htmlFor={name} className="text-[11px] text-[#888]">{label}</label>}
        <input id={name} aria-label={name} defaultValue={value} className="w-0 min-w-0 flex-1 bg-transparent pr-px text-right text-[11px]" />
      </div>
      <button className="w-[18px] text-[6px]" aria-label="Больше">▲</button>
    </div>
  );
}

function Depth({ book, className }: { book: Book; className: string }) {
  const id = book.title.slice(0, 6);
  const rows = [...book.asks.map((p) => ({ p, ask: true })), ...book.bids.map((p) => ({ p, ask: false }))];
  const flat = 'border border-[#b4b4b4] bg-[#f0f0f0] text-[#808080]';
  return (
    <section className={`absolute flex h-[385px] w-[254px] flex-col border border-[#6e6e6e] bg-white px-px pb-0.5 shadow-[2px_3px_10px_rgba(0,0,0,0.4)] ${className}`}>
      <header className="flex h-[30px] shrink-0 items-center justify-between pr-2 pb-1 pl-1.5 text-[11px]">
        <h3 className="whitespace-nowrap">{book.title}</h3>
        <button aria-label="Закрыть">
          <svg className="h-3 w-3" viewBox="0 0 12 12"><path d="M1 1l10 10m0-10l-10 10" stroke="#222" /></svg>
        </button>
      </header>
      <div className="flex h-[27px] shrink-0 items-center border-y border-[#b0b0b0] bg-[#f0f0f0] pl-1.5">
        <button aria-label="Тиковый график" className="mr-3">
          <svg className="h-4 w-4" viewBox="0 0 16 16">
            <rect x="0.500" y="0.500" width="15" height="15" rx="1" fill="#fff4fc" stroke="#4a90d0" />
            <path d="M2 6l2-3l2 3l2-2l2 1" fill="none" stroke="#e04040" />
            <path d="M2 12l2-2l2 2l3-3l1 3h2" fill="none" stroke="#2060b0" />
          </svg>
        </button>
        <button aria-label="Время и продажи" className="mr-2">
          <svg className="h-4 w-4" viewBox="0 0 16 16">
            <path d="M.5.5h13v11h-13zM.5 4h13M.5 8h13M5 .5v11M9.500 .5v11" fill="#f4f8fc" stroke="#88a4c0" />
            <circle cx="11.500" cy="11.500" r="4" fill="#e4f4ff" stroke="#3080d0" />
            <path d="M11.500 9v3h2" fill="none" stroke="#205090" />
          </svg>
        </button>
        <span className="mr-[9px] h-5 w-px bg-[#909090]" />
        <button aria-label="Автопривязка" className="mr-2">
          <svg className="h-4 w-4" viewBox="0 0 16 16">
            <path d="M.5.5h13v11h-13z" fill="#fff" stroke="#4a90d0" />
            <path d="M0 1.500h14" stroke="#4a90d0" strokeWidth="2" />
            <path d="M2 8l3-3l3 2l3-2" fill="none" stroke="#40a020" strokeWidth="2" />
            <path d="M8 9h4a3 3 0 0 1 0 6h-4" fill="none" stroke="#c84030" strokeWidth="2" />
          </svg>
        </button>
        <button aria-label="Стакан" className="mr-0.5 flex h-[22px] w-[26px] items-center justify-center border border-[#98c8f0] bg-[#c4e0f4]">
          <svg className="h-4 w-3" viewBox="0 0 12 16"><rect x="2.500" y="2.500" width="7" height="12" rx="1" fill="#f4f8ff" stroke="#606080" /><path d="M1 6.500h10M1 10.500h10" stroke="#3070c0" /></svg>
        </button>
        <button aria-label="Уровни" className="flex h-[22px] w-[26px] items-center justify-center border border-[#98c8f0] bg-[#c4e0f4]">
          <svg className="h-4 w-4" viewBox="0 0 16 16">
            <path d="M0 6h3l1-5l2 7l1-3h2" fill="none" stroke="#e02020" />
            <path d="M8 4h8M8 7h8M8 10h8" stroke="#fff" strokeWidth="2" />
            <path d="M9 3.500h7M9 6.500h7M9 9.500h7" stroke="#a06060" />
            <path d="M1 11l3 4l2-4" fill="none" stroke="#2060c0" />
          </svg>
        </button>
      </div>
      <table className={`w-full table-fixed border-separate border-spacing-0 text-[11px] leading-[14px] ${small}`}>
        <colgroup>
          <col className="w-[82px]" />
          <col className="w-[85px]" />
          <col />
        </colgroup>
        <thead>
          <tr className="h-[26px]">
            <th className="border-r border-[#c8c8c8] font-normal">Объем</th>
            <th className="border-r border-[#c8c8c8] font-normal">Цена</th>
            <th className="font-normal">Торговля</th>
          </tr>
        </thead>
        <tbody>
          {rows.map(({ p, ask }, k) => {
            const lastAsk = k === book.asks.length - 1;
            const firstBid = k === book.asks.length;
            const v = lastAsk ? book.ask : firstBid ? book.bid : null;
            const line = lastAsk ? 'border-b border-b-black' : 'border-b border-b-[#c8c8c8]';
            return (
              <tr key={p}>
                <td className={`h-5 border-r border-r-[#c8c8c8] p-0 ${line}`}>
                  {v && (
                    <div
                      className={`ml-auto h-[19px] bg-linear-to-r pr-1 text-right leading-[19px] ${ask ? 'from-[#b09cb0] to-[#fde6fd]' : 'from-[#98a8c4] to-[#d6e4fe]'}`}
                      style={{ width: `${v[1]}%` }}
                    >
                      {v[0]}
                    </div>
                  )}
                </td>
                <td className={`h-5 border-r border-r-[#c8c8c8] p-0 text-center ${line} ${ask ? 'bg-[#fde6fd]' : 'bg-[#d6e4fe]'}`}>{p}</td>
                <td className={`h-5 p-0 ${line}`}>
                  <div className="flex justify-between px-px">
                    <button aria-label={`Sell ${p}`} className="flex h-[17px] w-[17px] items-center justify-center border border-[#c8c8c8]">
                      <svg className="h-1.5 w-2" viewBox="0 0 8 6"><path d="M1 1l3 3l3-3" fill="none" stroke="#d03040" strokeWidth="1.500" /></svg>
                    </button>
                    <button aria-label={`Buy ${p}`} className="flex h-[17px] w-[17px] items-center justify-center border border-[#c8c8c8]">
                      <svg className="h-1.5 w-2" viewBox="0 0 8 6"><path d="M1 5l3-3l3 3" fill="none" stroke="#4848c8" strokeWidth="1.500" /></svg>
                    </button>
                  </div>
                </td>
              </tr>
            );
          })}
        </tbody>
      </table>
      <div className={`mt-auto grid grid-cols-3 gap-x-px gap-y-0.5 ${small}`}>
        <Spinner name={`${id}-sl`} label={book.sl[0]} value={book.sl[1]} />
        <Spinner name={`${id}-vol`} label="vol" value={book.vol} />
        <Spinner name={`${id}-tp`} label="tp" value={book.tp} />
        <button className={`h-5 text-[11px] ${book.live ? 'border border-[#b05050] bg-linear-to-b from-[#e88c88] to-[#c05c5c]' : flat}`}>Sell</button>
        <button className={`h-5 text-[11px] ${flat}`}>Закрыть</button>
        <button className={`h-5 text-[11px] ${book.live ? 'border border-[#5068a0] bg-linear-to-b from-[#98b4e4] to-[#6484bc]' : flat}`}>Buy</button>
      </div>
    </section>
  );
}

const sp = {
  asks: ['4438.75', '4438.50', '4438.25', '4438.00', '4437.75', '4437.50'],
  bids: ['4437.25', '4437.00', '4436.75', '4436.50', '4436.25', '4436.00'],
};

const books: Book[] = [
  { ...sp, title: 'EPU21, E-Mini S&P 500: September 2021', ask: [116, 100], bid: [73, 62], sl: ['sl', 225], vol: 0, tp: 75 },
  { ...sp, title: 'MESU21, Micro E-mini S&P 500 ($5): S...', ask: [69, 95], bid: [72, 100], sl: ['sl', 600], vol: 1, tp: 500, live: true },
  {
    title: 'MNQU21, Micro E-mini Nasdaq-100 ($...',
    asks: ['15034.75', '15034.50', '15034.25', '15034.00', '15033.75', '15033.50'],
    bids: ['15033.25', '15032.75', '15032.50', '15032.25', '15032.00'],
    ask: [6, 100],
    bid: [3, 50],
    sl: ['', 1500],
    vol: 0,
    tp: 300,
  },
];

function Ico({ children, w = 'w-5' }: { children: ReactNode; w?: string }) {
  return <svg className={`h-5 ${w}`} viewBox="0 0 20 20" fill="none">{children}</svg>;
}

const Plus = () => (
  <>
    <circle cx="15" cy="15" r="4.500" fill="#4cb830" stroke="#2a8a18" />
    <path d="M15 12.500v5M12.500 15h5" stroke="#fff" strokeWidth="2" />
  </>
);

function Tool({ children, label, on, className = '' }: { children: ReactNode; label: string; on?: boolean; className?: string }) {
  return (
    <button aria-label={label} className={`flex h-[26px] w-[30px] shrink-0 items-center justify-center ${on ? 'border border-[#98c8f0] bg-[#c4e0f4]' : ''} ${className}`}>
      {children}
    </button>
  );
}

const Caret = () => <svg className="h-1 w-2 shrink-0" viewBox="0 0 8 4"><path d="M0 0h8l-4 4z" /></svg>;
const Sep = ({ className = '' }: { className?: string }) => <span className={`h-[25px] w-px shrink-0 bg-[#a0a0a0] ${className}`} />;
const Grip = () => <span className="h-6 w-0 shrink-0 border-l-2 border-dotted border-[#b8b8b8]" />;
const axes = <path d="M3.500 1v17M1 15.500h17M2 3l1.500-2l1.500 2M16 14l2 1.500l-2 1.500" stroke="#2050b0" />;

function Toolbar() {
  return (
    <div className="flex h-[31px] items-center">
      <div className="flex h-full items-center border-r border-b border-[#a8a8a8] pl-[3px]">
        <Grip />
        <Tool label="Новый график" className="ml-0.5">
          <Ico>
            <path d="M.5 1.500h17v14h-17z" fill="#fff" stroke="#2878c8" />
            <path d="M0 2.500h18" stroke="#4aa0e8" strokeWidth="3" />
            <path d="M3 5v9M2 12.500h10" stroke="#2878c8" />
            <path d="M4 11l3-4l2 2l3-3l4 3" stroke="#40a020" strokeWidth="1.500" />
            <Plus />
          </Ico>
        </Tool>
        <Caret />
        <Tool label="Профили" className="ml-0.5">
          <Ico>
            <path d="M5.500 1.500h13v9h-13z" fill="#fff" stroke="#2878c8" /><path d="M5 2.500h14" stroke="#4aa0e8" strokeWidth="3" />
            <path d="M1.500 8.500h13v10h-13z" fill="#fff" stroke="#2878c8" /><path d="M1 9.500h14" stroke="#4aa0e8" strokeWidth="3" />
            <path d="M3 14l3 2l3-3l4 1" stroke="#40a020" strokeWidth="1.500" />
          </Ico>
        </Tool>
        <Caret />
        <Tool label="Счета" className="ml-0.5">
          <Ico>
            <rect x="6.500" y="1.500" width="13" height="13" rx="2" fill="#d4ecff" stroke="#2878c8" strokeWidth="1.500" />
            <rect x="1" y="5" width="13" height="14" rx="1" fill="#f4c030" stroke="#b08010" />
            <path d="M10 9q-2-1-4 0t1.500 3t1.500 3t-4 0M7.500 7.500v10" stroke="#fff" strokeWidth="1.500" />
          </Ico>
        </Tool>
        <Sep className="mx-1" />
        <Tool label="Библиотека">
          <Ico><path d="M1 8l8-6l10 8l-7 8z" fill="#e0b030" stroke="#907020" /><path d="M1 8l11 10v-3l-10-9z" fill="#fff0b0" /><path d="M8 7q4-2 5 1t-4 3" stroke="#705010" strokeWidth="1.500" /></Ico>
        </Tool>
        <Tool label="Маркет" className="ml-0.5">
          <Ico><path d="M3 7h14v12h-14z" fill="#f4b818" stroke="#c89010" /><path d="M7 9v-7h6v7" stroke="#b08020" /><path d="M7 12h2v2h2v-2h2v4h-6z" fill="#204890" /></Ico>
        </Tool>
        <Tool label="Сигналы" className="ml-0.5">
          <Ico><path d="M2 10h4v8h-4zM9 7h4v8h-4z" fill="#10b010" /><path d="M4 8v12M11 5v12" stroke="#108010" /><path d="M7 5a6 6 0 0 1 9 8M6 2a9 9 0 0 1 13 11" stroke="#3a90d8" /></Ico>
        </Tool>
        <Tool label="VPS" className="ml-0.5">
          <Ico><path d="M4 8a3 3 0 0 1 1-6a5 5 0 0 1 9 0a3 3 0 0 1 2 6z" fill="#e0f4ff" stroke="#3a90d8" /><path d="M4 7h13v4h-13zM4 12h13v4h-13z" fill="#3c5458" /><path d="M6 9h3M6 14h3" stroke="#50e070" /><path d="M10.500 16v3M5 18.500h11" stroke="#3c5458" strokeWidth="2" /></Ico>
        </Tool>
        <Tool label="Чаты" className="ml-0.5">
          <Ico><circle cx="13" cy="10" r="3" fill="#40a090" /><path d="M7 19q0-5 6-5t7 5z" fill="#40a090" /><path d="M5 14a7 7 0 1 1 10-9M7 11a4 4 0 0 1 5-6" stroke="#3a90d8" strokeWidth="1.500" /></Ico>
        </Tool>
        <Sep className="mx-1" />
        <button className="flex h-[26px] items-center gap-1.5 border border-[#98c8f0] bg-[#c4e0f4] px-1 text-[11px]">
          <Ico>
            <path d="M1 4l8-3l7 3l-7 3z" fill="#444" /><path d="M4 5h9v5l-5 3l-4-3z" fill="#8a7868" />
            <path d="M1 19l3-7l4 2l3-2l3 7z" fill="#2c6ca8" /><circle cx="15" cy="15" r="4.500" fill="#58c038" stroke="#2a8a18" /><path d="M13.500 12.500l4 2.500l-4 2.500z" fill="#fff" />
          </Ico>
          Алготрейдинг
        </button>
        <button className="flex h-[26px] items-center gap-1 px-1.5 text-[11px]">
          <Ico><path d="M4 1h14v14h-14z" fill="#fbe48a" stroke="#c09820" /><path d="M7 4h9M7 7h9M7 10h6" stroke="#806010" /><path d="M2 3h4M2 6h4M2 9h4M2 12h4" stroke="#c09820" strokeWidth="1.500" /><Plus /></Ico>
          Новый ордер
        </button>
        <Sep className="mx-1" />
        <Tool label="Бары"><Ico>{axes}<path d="M8 5v9M6 12h2M8 7h3M13 3v9M11 10h2M13 5h3" stroke="#3c9020" strokeWidth="2" /></Ico></Tool>
        <Tool label="Свечи" on className="ml-0.5"><Ico>{axes}<path d="M6.500 6.500h3v6h-3zM8 3v3M8 12v2M12.500 5.500h3v6h-3zM14 3v2M14 12v2" fill="#e8ffe0" stroke="#3c9020" /></Ico></Tool>
        <Tool label="Линия" className="ml-0.5"><Ico>{axes}<path d="M4 12l5-6l4 4l5-5" stroke="#3c9020" strokeWidth="2" /></Ico></Tool>
        <Sep className="mx-1" />
        <Tool label="Увеличить"><Ico><path d="M11 11l6 7" stroke="#2860b8" strokeWidth="4" /><circle cx="8" cy="7" r="5.500" fill="#d8eeff" stroke="#2878c8" strokeWidth="1.500" /><path d="M8 4v6M5 7h6" stroke="#2050a0" strokeWidth="1.500" /></Ico></Tool>
        <Tool label="Уменьшить" className="ml-0.5"><Ico><path d="M11 11l6 7" stroke="#2860b8" strokeWidth="4" /><circle cx="8" cy="7" r="5.500" fill="#d8eeff" stroke="#2878c8" strokeWidth="1.500" /><path d="M5 7h6" stroke="#2050a0" strokeWidth="1.500" /></Ico></Tool>
        <Tool label="Плитка" className="ml-0.5">
          <Ico>
            {[[0, 0], [10, 0], [0, 10], [10, 10]].map(([x, y]) => (
              <g key={`${x}${y}`} transform={`translate(${x} ${y})`}>
                <path d="M.5 .5h9v9h-9z" fill="#fff" stroke="#2878c8" /><path d="M0 1.500h10" stroke="#2878c8" strokeWidth="3" /><path d="M2 8l2-2l2 1l2-2" stroke="#40a020" strokeWidth="1.500" />
              </g>
            ))}
          </Ico>
        </Tool>
        <Sep className="mx-1" />
        <Tool label="Автопрокрутка" on><Ico>{axes}<path d="M8 8h4v-3l5 4.500l-5 4.500v-3h-4z" fill="#50c030" /><path d="M18.500 2v13" stroke="#333" /></Ico></Tool>
        <Tool label="Сдвиг графика" on className="ml-0.5"><Ico>{axes}<path d="M12.500 2v13" stroke="#333" /><path d="M19 8h-2v-2l-3 3l3 3v-2h2z" fill="#60a0f0" stroke="#2868c8" /></Ico></Tool>
        <Sep className="mx-1" />
        <Tool label="Шаблоны"><Ico><path d="M.5 1.500h18v15h-18z" fill="#fff" stroke="#2878c8" /><path d="M0 2h19" stroke="#4aa0e8" strokeWidth="3" /><path d="M3 4v11M5 10l4-4l4 3l4-3" stroke="#3c9020" strokeWidth="1.500" /><path d="M9 9h10v10h-10z" fill="#666" /><path d="M11 9h6v4h-6zM12 15h4v4h-4z" fill="#eee" /></Ico></Tool>
      </div>
      <div className="flex h-full items-center border-r border-b border-[#a8a8a8] pl-[3px]">
        <Grip />
        <Tool label="Курсор" on className="ml-1"><Ico><path d="M8 4v11l3-3l2 5l2-1l-2-4h4z" fill="#fff" stroke="#555" /></Ico></Tool>
        <Tool label="Перекрестие" className="ml-0.5"><Ico><path d="M10 1v7M10 12v7M1 10h7M12 10h7M9 10h2" stroke="#555" strokeWidth="1.500" /></Ico></Tool>
        <Sep className="mx-[3px]" />
        <Tool label="Вертикальная линия"><Ico><path d="M10 3v14" stroke="#555" strokeWidth="1.500" /></Ico></Tool>
        <Tool label="Горизонтальная линия" className="ml-0.5"><Ico><path d="M3 10h14" stroke="#555" strokeWidth="1.500" /></Ico></Tool>
        <Tool label="Трендовая линия" className="ml-0.5"><Ico><path d="M4 16l12-12" stroke="#555" strokeWidth="1.500" /></Ico></Tool>
        <Tool label="Канал" className="ml-0.5"><Ico><path d="M1 18l14-16M5 19l12-14M4 8v9M8 5v9M12 2v9M2 13h4M6 9h4M10 6h5" stroke="#555" /><path d="M18 13h-4v6h4M14 16h3" stroke="#000" strokeWidth="1.500" /></Ico></Tool>
        <Tool label="Фибоначчи" className="ml-0.5"><Ico><path d="M3 2.500h14M3 6.500h14M3 10.500h7M3 14.500h6" stroke="#555" strokeDasharray="1 1" /><path d="M17 13h-4v7M13 16h3" stroke="#000" strokeWidth="1.500" /></Ico></Tool>
        <Tool label="Текст" className="ml-0.5"><Ico><path d="M3.500 3.500h13v13h-13z" stroke="#555" strokeDasharray="1 1" /><path d="M6 7v-1h8v1M10 6v8M8 14h4" stroke="#444" strokeWidth="1.500" /></Ico></Tool>
        <Tool label="Объекты"><Ico><path d="M6 3l3 3h-2v3h-2v-3h-2zM14 17l-3-3h2v-3h2v3h2z" stroke="#555" /><path d="M5 12l3 3l7-9" stroke="#777" strokeWidth="1.500" /></Ico></Tool>
        <span className="mr-1.5"><Caret /></span>
      </div>
      <div className="ml-auto flex items-center gap-4 pr-[5px]">
        <button aria-label="Поиск"><svg className="h-4 w-4" viewBox="0 0 16 16" fill="none"><circle cx="6" cy="6" r="4.500" stroke="#555" strokeWidth="1.500" /><path d="M9 9l5 5" stroke="#555" strokeWidth="2" /></svg></button>
        <button aria-label="Профиль"><svg className="h-4 w-4" viewBox="0 0 16 16" fill="none" stroke="#111"><circle cx="8" cy="8" r="7.300" /><circle cx="8" cy="6.500" r="3" /><path d="M3.500 13q1-3.500 4.500-3.500t4.500 3.500M5 6q3 1 6-1" /></svg></button>
        <button aria-label="Уровень" className="-mr-2 flex flex-col items-center text-[#18b018]">
          <svg className="h-[11px] w-[18px]" viewBox="0 0 18 11" fill="none"><path d="M1.500 11a7.500 8 0 0 1 15 0" stroke="currentColor" strokeWidth="2" /><path d="M9 4l3.500 4h-2v3h-3v-3h-2z" fill="currentColor" /></svg>
          <span className="font-['Liberation_Sans',sans-serif] text-[8px] leading-[8px] font-bold">LVL</span>
        </button>
        <div className="h-[13px] w-[42px] border border-[#808080] bg-white"><div className="h-full w-[13px] bg-[#40e040]" /></div>
      </div>
    </div>
  );
}

const cols: [string, string, boolean?][] = [
  ['Время', 'w-[157px]', true], ['Символ', 'w-[110px]'], ['Тикет', 'w-[86px]'], ['Тип', 'w-[72px]'], ['Объем', 'w-[122px]'],
  ['Цена', 'w-[122px]'], ['S / L', 'w-[123px]'], ['T / P', 'w-[121px]'], ['Время', 'w-[141px]'], ['Цена', 'w-[121px]'],
  ['Комиссия', 'w-[122px]'], ['Прибыль', 'w-[136px]'], ['Изменение', 'w-[99px]'], ['Комментарий', ''],
];

const deals = [
  ['2021.08.16 12:47:01', 'mnqu21', '140710223', 'sell', '3', '15076.75', '15091.75', '15073.75', '2021.08.16 12:54:45', '15073.75', '-2.14', '15.28', '0.02 %', ''],
  ['2021.08.16 13:58:25', 'mnqu21', '140730826', 'buy', '3', '15040.75', '15025.25', '15043.25', '2021.08.16 14:00:02', '15025.25', '-2.14', '-78.98', '-0.10 %', ''],
];

function History() {
  return (
    <div className="relative flex-1 bg-white">
      <table className="w-full table-fixed border-separate border-spacing-0 text-[11px] leading-[14px]">
        <thead>
          <tr className="h-6">
            {cols.map(([name, w, left], k) => (
              <th key={k} className={`border-r border-[#d8d8d8] px-1.5 font-normal ${w} ${left ? 'text-left' : 'text-right'}`}>
                {name}
                {k === 8 && <svg className="ml-3 inline h-1 w-2" viewBox="0 0 8 4"><path d="M0 4h8l-4-4z" fill="#444" /></svg>}
              </th>
            ))}
          </tr>
        </thead>
        <tbody>
          {deals.map((d, r) => (
            <tr key={r} className={r ? 'bg-[#ececec]' : ''}>
              {d.map((v, k) => {
                const tone =
                  k === 7 && r === 0 ? 'bg-[#60f060]' : k === 6 && r === 1 ? 'bg-[#ffa0a0]' : k === 11 || k === 12 ? (r ? 'text-[#e02020]' : 'text-[#2020e0]') : '';
                return (
                  <td key={k} className={`h-5 border-r border-b border-r-[#d8d8d8] border-b-[#c8c8c8] p-0 pr-1 ${k ? 'text-right' : 'pl-0.5'} ${tone}`}>
                    {k === 0 ? (
                      <span className="flex items-center gap-1.5">
                        <svg className="h-[15px] w-3" viewBox="0 0 12 15"><path d="M.5.5h11v10l-4 4h-7z" fill={r ? '#e4f4ff' : '#fff0e8'} stroke={r ? '#2890d8' : '#e07040'} /><path d="M3 4h6M3 6.500h6M3 9h6" stroke={r ? '#2890d8' : '#e07040'} /></svg>
                        {v}
                      </span>
                    ) : (
                      v
                    )}
                  </td>
                );
              })}
            </tr>
          ))}
          <tr className="bg-[#c8c8c8] font-bold">
            <td colSpan={10} className="h-5 p-0 pl-0.5">
              <span className="flex items-center gap-1.5">
                <svg className="h-3 w-3" viewBox="0 0 12 12" fill="none" stroke="#333"><circle cx="6" cy="6" r="5.300" /><path d="M3 6h6" /></svg>
                Прибыль: -36.31&nbsp; Кредит: 0.00&nbsp; Депозит: 0.00&nbsp; Снятие: 0.00&nbsp; Баланс: -36.31
              </span>
            </td>
            <td className="p-0 pr-1 text-right">-9.56</td>
            <td className="p-0 pr-1 text-right">-26.75</td>
            <td colSpan={2} />
          </tr>
        </tbody>
      </table>
      <div role="tooltip" className="absolute top-[70px] left-[275px] border border-[#767676] bg-white px-1.5 py-px text-[11px] leading-4 text-[#575757] shadow-[2px_2px_3px_rgba(0,0,0,0.4)]">
        #140730826, Установлен вручную
      </div>
    </div>
  );
}

const panelTabs: [string, number?][] = [
  ['Торговля'], ['Активы'], ['История'], ['Новости'], ['Почта', 7], ['Календарь'], ['Компания'], ['Алерты'], ['Статьи', 1], ['Библиотека'], ['Эксперты'], ['Журнал'],
];

function Toolbox() {
  return (
    <div className="flex h-[115px] border-t border-[#a0a0a0]">
      <div className="flex w-4 shrink-0 flex-col items-center">
        <button aria-label="Закрыть панель" className="h-3 text-[9px] leading-3 font-bold">x</button>
        <div className="flex w-[13px] flex-1 items-end justify-center bg-linear-to-b from-[#b8d4f0] to-[#98b8dc] pb-0.5">
          <span className="rotate-180 text-[11px] leading-3 [writing-mode:vertical-rl]">Инструменты</span>
        </div>
      </div>
      <div className="flex min-w-0 flex-1 flex-col">
        <div className="flex h-[90px] border-l border-[#a0a0a0] bg-white">
          <History />
          <div className="flex w-4 flex-col items-center justify-between bg-[#f0f0f0] py-1.5">
            <svg className="h-1.5 w-2.5" viewBox="0 0 10 6"><path d="M1 5l4-4l4 4" fill="none" stroke="#555" strokeWidth="1.500" /></svg>
            <span className="mt-5 h-8 w-4 bg-[#cdcdcd]" />
            <svg className="h-1.5 w-2.5" viewBox="0 0 10 6"><path d="M1 1l4 4l4-4" fill="none" stroke="#555" strokeWidth="1.500" /></svg>
          </div>
        </div>
        <div className="flex h-5 border-t border-black pl-0.5 text-[11px]">
          {panelTabs.map(([t, n]) =>
            t === 'История' ? (
              <button key={t} className="-mt-px h-5 border border-t-0 border-black bg-white px-[9px]">{t}</button>
            ) : (
              <button key={t} className="flex items-center text-[#6c6c6c]">
                <span className="pr-[10px] pl-[11px]">
                  {t}
                  {n && <sub className="text-[9px] font-bold text-[#f02020]">{n}</sub>}
                </span>
                {t !== 'Активы' && t !== 'Журнал' && <span className="h-3 w-px bg-[#808080]" />}
              </button>
            ),
          )}
          <div className="mt-1 ml-auto flex items-center gap-4 pr-3">
            <button className="flex items-center gap-1"><svg className="h-3.5 w-3" viewBox="0 0 12 14"><path d="M1 4h10v9h-10z" fill="#f4b818" stroke="#a07010" /><path d="M4 4v-3h4v3" fill="none" stroke="#a07010" /><path d="M4 8h4v3h-4z" fill="#204890" /></svg>Маркет</button>
            <button className="flex items-center gap-1"><svg className="h-3.5 w-3.5" viewBox="0 0 14 14" fill="none"><path d="M2 7h3v6h-3zM6 5h3v6h-3z" fill="#10b010" /><path d="M4 3a6 6 0 0 1 8 7M2 1" stroke="#3a90d8" strokeWidth="1.500" /></svg>Сигналы</button>
            <button className="flex items-center gap-1"><svg className="h-3.5 w-3.5" viewBox="0 0 14 14"><path d="M3 6a3 3 0 0 1 1-5h6a3 3 0 0 1 1 5z" fill="#b8e0fc" stroke="#3a90d8" /><path d="M2 6h10v3h-10zM2 10h10v3h-10z" fill="#3c5458" /></svg>VPS</button>
            <button className="flex items-center gap-1"><svg className="h-3.5 w-4" viewBox="0 0 16 14"><path d="M0 1h16v12h-16z" fill="#183c78" /><path d="M2 10l4-5l3 3l5-4" fill="none" stroke="#60e060" strokeWidth="1.500" /></svg>Тестер стратегий</button>
          </div>
        </div>
      </div>
    </div>
  );
}

export default function App() {
  return (
    <div className={`relative flex min-h-screen flex-col overflow-hidden bg-[#f0f0f0] text-black ${ui}`}>
      <header className="flex h-[23px] items-center justify-between bg-white pr-[17px] pb-1.5 pl-2">
        <h1 className="flex items-center gap-1 text-xs">
          <svg className="h-[17px] w-[17px]" viewBox="0 0 17 17">
            <circle cx="5" cy="11" r="5" fill="#e0a820" /><circle cx="12" cy="11" r="5" fill="#2878c8" /><circle cx="9" cy="5" r="4.500" fill="#38a048" />
            <circle cx="8.500" cy="9" r="4.500" fill="#fff0e8" stroke="#d04020" /><path d="M10.500 6.500h-3v2q3-.5 3 1.500t-3.500 1.200" fill="none" stroke="#c03018" />
          </svg>
          1263286 - AMPGlobalEU-Demo: Демо-счет - Netting - MNQU21,M1
        </h1>
        <div className="flex gap-9">
          <button aria-label="Свернуть"><svg className="h-2.5 w-2.5" viewBox="0 0 10 10"><path d="M0 5.500h10" stroke="#000" /></svg></button>
          <button aria-label="Развернуть"><svg className="h-2.5 w-2.5" viewBox="0 0 10 10"><path d="M.5.5h9v9h-9z" fill="none" stroke="#000" /></svg></button>
          <button aria-label="Закрыть"><svg className="h-2.5 w-2.5" viewBox="0 0 10 10"><path d="M0 0l10 10m0-10l-10 10" stroke="#000" /></svg></button>
        </div>
      </header>
      <nav className="flex h-[21px] items-center gap-[23px] border-b border-[#a8a8a8] pl-[11px] text-[11px]">
        {['Файл', 'Вид', 'Вставка', 'Графики', 'Сервис', 'Окно', 'Справка'].map((m) => (
          <button key={m}>{m}</button>
        ))}
      </nav>
      <Toolbar />
      <div className="flex h-[30px] items-center pl-[3px]">
        <Grip />
        <div className="flex h-full items-center border-r border-[#a8a8a8] pr-0.5 pl-[3px] text-[11px] text-[#505050]">
          {['M1', 'M5', 'M15', 'M30', 'H1', 'H4', 'D1', 'W1', 'MN'].map((t, k) => (
            <button key={t} className={`h-[26px] ${k ? 'w-8' : 'w-[30px] border border-[#98c8f0] bg-[#c4e0f4]'}`}>{t}</button>
          ))}
        </div>
      </div>

      <main className="grid grid-cols-2 border-t border-r border-b-2 border-[#696969]">
        <ChartWindow title="EPU21,M1" pad="pl-[7px]">
          <Chart c={epuM1} />
        </ChartWindow>
        <ChartWindow title="EPU21,M5" pad="pl-1.5">
          <button className="absolute top-2 left-[829px] h-[15px] w-[52px] border-2 border-t-[#c8c8c8] border-r-[#606060] border-b-[#606060] border-l-[#c8c8c8] bg-white text-[9px] leading-[11px]">
            EPU21
          </button>
          <Chart c={epuM5}>
            <M5Marks />
          </Chart>
        </ChartWindow>
        <ChartWindow title="MESU21,M1" pad="pl-[7px]">
          <ExpertButtons shift="left-[764px]" />
          <Chart c={mesM1}>
            <MesMarks />
          </Chart>
        </ChartWindow>
        <ChartWindow title="MNQU21,M1" active pad="pl-1.5">
          <ExpertButtons shift="left-[759px]" />
          <Chart c={mnqM1}>
            <MnqMarks />
          </Chart>
        </ChartWindow>
      </main>

      <nav className="flex h-5 border-t border-black text-xs text-[#707070]">
        <div className="flex pl-[3px]">
          {['EPU21,M1', 'MESU21,M1', 'EPU21,M5'].map((t, k) => (
            <button key={t} className="flex items-center">
              <span className="px-2.5">{t}</span>
              {k < 2 && <span className="h-3 w-px bg-[#808080]" />}
            </button>
          ))}
          <button className="-mt-px border border-t-0 border-black bg-white px-2.5 text-black">MNQU21,M1</button>
        </div>
        <div className="ml-auto flex items-center gap-[18px] pr-3">
          <button aria-label="Влево"><svg className="h-1.5 w-1" viewBox="0 0 4 6"><path d="M4 0v6l-4-3z" fill="#888" /></svg></button>
          <button aria-label="Вправо"><svg className="h-1.5 w-1" viewBox="0 0 4 6"><path d="M0 0v6l4-3z" fill="#888" /></svg></button>
        </div>
      </nav>
      <div className="h-1.5" />
      <Toolbox />
      <footer className="mt-auto flex h-[22px] items-stretch border-t border-b border-t-[#a8a8a8] border-b-[#484848] text-[11px]">
        <div className="ml-auto flex w-[692px] items-center border-l border-[#c8c8c8] pl-1.5">
          Default
          <span className="ml-auto flex items-center gap-1 pr-[42px]">
            <svg className="h-3 w-3.5" viewBox="0 0 14 12"><path d="M0 9h2v3h-2zM3 7h2v5h-2zM6 4h2v8h-2zM9 2h2v10h-2zM12 0h2v12h-2z" fill="#28a028" /></svg>
            170.78 ms
          </span>
        </div>
      </footer>

      <Depth book={books[0]} className="top-[99px] left-[17px]" />
      <Depth book={books[1]} className="top-[542px] left-[19px]" />
      <Depth book={books[2]} className="top-[540px] left-[973px]" />
    </div>
  );
}
